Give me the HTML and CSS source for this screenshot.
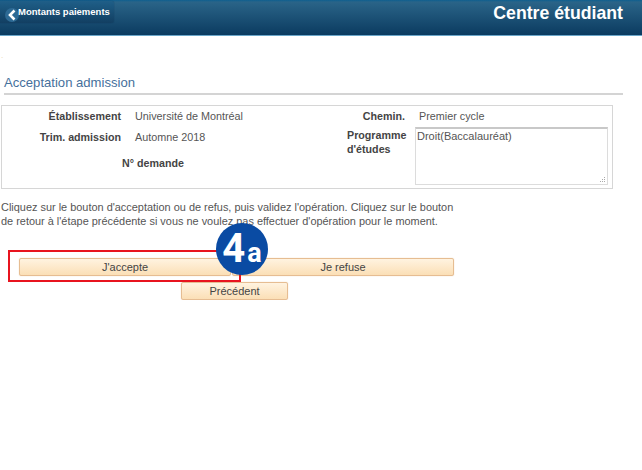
FILE: index.html
```html
<!doctype html>
<html lang="fr">
  <head>
    <meta charset="utf-8">
    <link rel="stylesheet" href="styles.css">
  </head>
  <body>
    <div class="top-bar">
      <a class="back-button">
        <svg class="back-icon" width="14" height="14" viewBox="0 0 14 14">
          <circle cx="7" cy="7" r="7" fill="#2d6a94"></circle>
          <path d="M9.5 2.5 L5 7 L9.5 11.5" fill="none" stroke="#fff" stroke-width="2.6"></path>
        </svg>
        <span>Montants paiements</span>
      </a>
      <div class="top-title">Centre étudiant</div>
    </div>

    <div class="page">
      <div class="dot">.</div>
      <h1 class="section-title">Acceptation admission</h1>

      <div class="info-box">
        <div class="info-left">
          <div class="info-row">
            <div class="label">Établissement</div>
            <div class="value">Université de Montréal</div>
          </div>
          <div class="info-row">
            <div class="label">Trim. admission</div>
            <div class="value">Automne 2018</div>
          </div>
          <div class="label demand">N° demande</div>
        </div>
        <div class="info-right">
          <div class="info-row">
            <div class="label path-label">Chemin.</div>
            <div class="value">Premier cycle</div>
          </div>
          <div class="program-row">
            <div class="label program-label">Programme d'études</div>
            <textarea class="program-box" readonly>Droit(Baccalauréat)</textarea>
          </div>
        </div>
      </div>

      <p class="help">Cliquez sur le bouton d'acceptation ou de refus, puis validez l'opération. Cliquez sur le bouton<br>de retour à l'étape précédente si vous ne voulez pas effectuer d'opération pour le moment.</p>

      <div class="actions">
        <div class="choice-row">
          <button class="btn btn-accept">J'accepte</button>
          <button class="btn btn-refuse">Je refuse</button>
        </div>
        <button class="btn btn-back">Précédent</button>
        <div class="callout"></div>
        <div class="callout-stem"></div>
        <div class="badge"><span class="badge-num">4</span><span class="badge-letter">a</span></div>
      </div>
    </div>
  </body>
</html>
```

FILE: styles.css
```css
html, body {
  margin: 0;
  padding: 0;
  background: #fff;
  font-family: "Liberation Sans", Arial, sans-serif;
  font-size: 10.8px;
  color: #555;
}

.top-bar {
  height: 35px;
  display: flex;
  justify-content: space-between;
  align-items: flex-start;
  background: linear-gradient(to bottom, #0f5f8f 0, #2a6488 2px, #0b3b60 100%);
  border-bottom: 1px solid #6aa6c9;
}

.back-button {
  width: 114px;
  height: 22px;
  margin-top: 1px;
  box-sizing: border-box;
  display: flex;
  align-items: flex-start;
  padding: 4px 0 0 5px;
  background: linear-gradient(to bottom, #1f5f88, #123f62);
  border-radius: 0 3px 3px 0;
  box-shadow: 0 0 1px #0a3050;
  color: #fff;
  font-size: 9.5px;
  font-weight: bold;
  line-height: 13px;
  white-space: nowrap;
}

.back-icon {
  margin: 3px -1px 0 0;
  flex: none;
}

.top-title {
  margin: 3px 19px 0 0;
  color: #fff;
  font-size: 17.7px;
  font-weight: bold;
  line-height: 20px;
}

.page {
  padding: 0 19px 0 1px;
}

.dot {
  height: 14px;
  margin-top: 13px;
  color: #e8cfa8;
  font-size: 8px;
  line-height: 14px;
}

.section-title {
  margin: 10px 0 0 3px;
  height: 20px;
  border-bottom: 2px solid #d4d4d4;
  color: #46709c;
  font-size: 13.1px;
  font-weight: normal;
  line-height: 20px;
}

.info-box {
  width: 610px;
  height: 82px;
  margin-top: 10px;
  display: flex;
  border: 1px solid #d6d6d6;
}

.info-left {
  width: 345px;
  flex: none;
}

.info-right {
  flex: 1;
}

.info-row {
  height: 21px;
  display: flex;
  line-height: 20px;
}

.label {
  color: #444;
  font-size: 10.7px;
  font-weight: bold;
  text-align: right;
}

.info-left .label {
  width: 119px;
}

.info-left .value {
  margin-left: 14px;
}

.info-left .info-row .label {
  flex: none;
}

.info-left .demand {
  width: 182px;
  margin-top: 8px;
  line-height: 14px;
}

.path-label {
  width: 58px;
}

.info-right .value {
  margin-left: 14px;
}

.program-row {
  display: flex;
}

.program-label {
  width: 62px;
  margin-top: 1px;
  text-align: left;
  line-height: 14px;
}

.program-box {
  width: 193px;
  height: 58px;
  margin: 0 0 0 6px;
  padding: 0 1px;
  box-sizing: border-box;
  border: 1px solid #dcdcdc;
  border-top: 2px solid #c8c8c8;
  outline: none;
  font-family: "Liberation Sans", Arial, sans-serif;
  font-size: 11px;
  line-height: 14px;
  color: #555;
}

.program-box::-webkit-resizer {
  background:
    linear-gradient(#aaa, #aaa) no-repeat right 2px bottom 2px / 1px 1px,
    linear-gradient(#aaa, #aaa) no-repeat right 2px bottom 4px / 1px 1px,
    linear-gradient(#aaa, #aaa) no-repeat right 2px bottom 6px / 1px 1px,
    linear-gradient(#aaa, #aaa) no-repeat right 4px bottom 2px / 1px 1px,
    linear-gradient(#aaa, #aaa) no-repeat right 4px bottom 4px / 1px 1px,
    linear-gradient(#aaa, #aaa) no-repeat right 6px bottom 2px / 1px 1px;
}

.help {
  margin: 11px 0 0;
  font-size: 10.93px;
  line-height: 14px;
  color: #555;
}

.actions {
  position: relative;
  margin-top: 30px;
  padding-left: 18px;
}

.choice-row {
  display: flex;
  gap: 1px;
  width: 436px;
}

.btn {
  height: 18px;
  padding: 0;
  box-sizing: border-box;
  border: 1px solid #e6bd92;
  border-radius: 2px;
  box-shadow: 0 0 1px #e6bd92;
  background: linear-gradient(to bottom, #fff3e0, #fbdfb6);
  font-family: "Liberation Sans", Arial, sans-serif;
  font-size: 11px;
  color: #444;
}

.btn-accept {
  width: 212px;
}

.btn-refuse {
  width: 222px;
}

.btn-back {
  display: block;
  width: 107px;
  margin: 6px 0 0 162px;
}

.callout {
  position: absolute;
  left: 7px;
  top: -8px;
  width: 232px;
  height: 32px;
  box-sizing: border-box;
  border: 2px solid #e8141f;
  border-right: 0;
}

.callout-stem {
  position: absolute;
  left: 238px;
  top: 0;
  width: 2px;
  height: 24px;
  background: #e8141f;
}

.badge {
  position: absolute;
  left: 215px;
  top: -35px;
  width: 52px;
  height: 52px;
  display: flex;
  justify-content: center;
  align-items: baseline;
  border-radius: 50%;
  background: #0a4ba3;
  color: #fff;
  font-family: Roboto, "Liberation Sans", sans-serif;
  font-weight: bold;
  line-height: 52px;
}

.badge-num {
  font-size: 40px;
}

.badge-letter {
  font-size: 27px;
  margin-left: 2px;
}
```
